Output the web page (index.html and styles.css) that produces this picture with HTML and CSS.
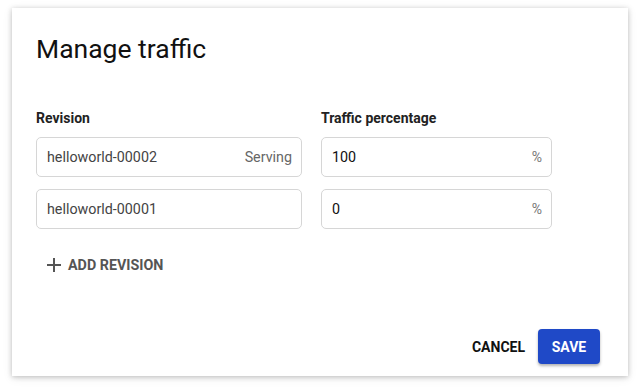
FILE: index.html
```html
<!DOCTYPE html>
<html lang="en">
<head>
    <meta charset="UTF-8">
    <title>Manage traffic</title>
    <link rel="stylesheet" href="styles.css">
</head>
<body>
    <div class="dialog">
        <h1 class="dialog-title">Manage traffic</h1>
        <div class="traffic-grid">
            <div class="col-label">Revision</div>
            <div class="col-label">Traffic percentage</div>

            <div class="field">
                <span class="field-value">helloworld-00002</span>
                <span class="field-hint">Serving</span>
            </div>
            <div class="field">
                <span class="field-value dark">100</span>
                <span class="field-suffix">%</span>
            </div>

            <div class="field">
                <span class="field-value">helloworld-00001</span>
            </div>
            <div class="field">
                <span class="field-value dark">0</span>
                <span class="field-suffix">%</span>
            </div>
        </div>

        <button class="add-btn">
            <svg width="14" height="14" viewBox="0 0 14 14"><path d="M7 0v14M0 7h14" stroke="#555" stroke-width="2"/></svg>
            ADD REVISION
        </button>

        <div class="dialog-actions">
            <button class="cancel-btn">CANCEL</button>
            <button class="save-btn">SAVE</button>
        </div>
    </div>
</body>
</html>
```

FILE: styles.css
```css
body {
    margin: 0;
    padding: 8px 11px 13px 12px;
    background-color: #fff;
    font-family: Roboto, "Liberation Sans", sans-serif;
}

.dialog {
    background-color: #fff;
    height: 368px;
    box-sizing: border-box;
    padding: 26px 24px 0 24px;
    box-shadow: 0 1px 5px rgba(0, 0, 0, 0.22), 0 2px 10px rgba(0, 0, 0, 0.08);
    display: flex;
    flex-direction: column;
}

.dialog-title {
    margin: 0;
    font-size: 26.5px;
    font-weight: 400;
    line-height: 30px;
    color: #111;
}

.traffic-grid {
    display: grid;
    grid-template-columns: 266px 231px;
    column-gap: 19px;
    row-gap: 12px;
    margin-top: 46px;
}

.col-label {
    font-size: 14px;
    font-weight: 700;
    color: #222;
    line-height: 16px;
    margin-bottom: -1px;
}

.field {
    height: 40px;
    box-sizing: border-box;
    border: 1px solid #d6d6d6;
    border-radius: 5px;
    display: flex;
    align-items: center;
    justify-content: space-between;
    padding: 0 9px 0 10px;
    font-size: 14.3px;
}

.field-value {
    color: #444;
}

.field-value.dark {
    color: #111;
}

.field-hint {
    color: #666;
}

.field-suffix {
    color: #777;
    font-size: 14px;
}

.add-btn {
    align-self: flex-start;
    display: flex;
    align-items: center;
    gap: 7px;
    margin: 28px 0 0 11px;
    padding: 0;
    background: none;
    border: none;
    font-family: inherit;
    font-size: 14.3px;
    font-weight: 700;
    color: #555;
    cursor: pointer;
}

.dialog-actions {
    margin-top: auto;
    margin-bottom: 12px;
    display: flex;
    justify-content: flex-end;
    align-items: center;
    gap: 13px;
    margin-right: 4px;
}

.cancel-btn {
    background: none;
    border: none;
    font-family: inherit;
    font-size: 14px;
    font-weight: 700;
    color: #111;
    padding: 0;
    cursor: pointer;
}

.save-btn {
    width: 62px;
    height: 35px;
    background-color: #1f49c7;
    color: #fff;
    border: none;
    border-radius: 4px;
    font-family: inherit;
    font-size: 14px;
    font-weight: 700;
    box-shadow: 0 2px 3px rgba(0, 0, 0, 0.3);
    cursor: pointer;
}
```
